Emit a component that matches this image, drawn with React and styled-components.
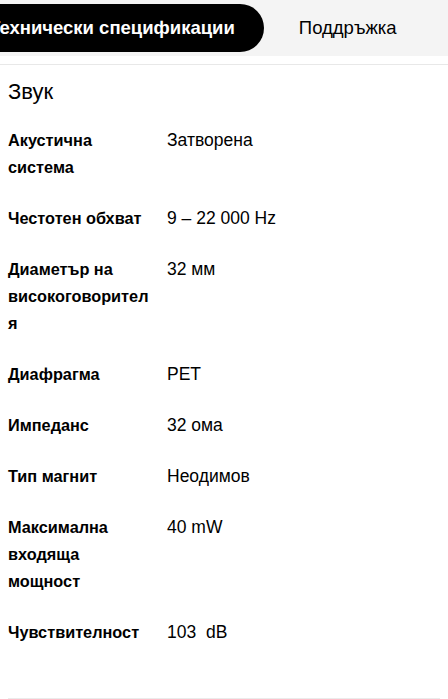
import React from "react";
import styled, { createGlobalStyle } from "styled-components";

const Global = createGlobalStyle`
  html, body { margin: 0; padding: 0; background: #fff; }
  body { font-family: "Liberation Sans", Arial, sans-serif; color: #000; overflow: hidden; }
`;

const Header = styled.header`
  padding-bottom: 8px;
  border-bottom: 1px solid #e8e8e8;
`;

const TabBar = styled.nav`
  background: #f4f4f4;
  padding: 4px 0;
  overflow: hidden;
`;

const TabList = styled.div`
  display: flex;
  align-items: center;
  gap: 6px;
  margin-left: -40px;
  white-space: nowrap;
`;

const Tab = styled.div`
  height: 48px;
  flex: none;
  display: flex;
  align-items: center;
  padding: 0 29px;
  border-radius: 24px;
  font-size: 18.5px;
  font-weight: ${(p) => (p.$active ? 700 : 400)};
  background: ${(p) => (p.$active ? "#000" : "transparent")};
  color: ${(p) => (p.$active ? "#fff" : "#000")};
`;

const Section = styled.section`
  padding: 0 8px;
  margin-top: 11px;
`;

const Heading = styled.h2`
  margin: 0;
  font-size: 22px;
  font-weight: 400;
  line-height: 32px;
`;

const Table = styled.dl`
  margin: 7px 0 0;
  display: grid;
  grid-template-columns: 159px 1fr;
  border-bottom: 1px solid #ebebeb;
  padding-bottom: 40px;
`;

const Label = styled.dt`
  font-size: 16.3px;
  font-weight: 700;
  line-height: 27px;
  padding: 12px 16px 12px 0;
  overflow-wrap: anywhere;
`;

const Value = styled.dd`
  margin: 0;
  font-size: 17.5px;
  line-height: 27px;
  padding: 12px 0;
`;

const specs = [
  ["Акустична система", "Затворена"],
  ["Честотен обхват", "9 – 22 000 Hz"],
  ["Диаметър на високоговорителя", "32 мм"],
  ["Диафрагма", "PET"],
  ["Импеданс", "32 ома"],
  ["Тип магнит", "Неодимов"],
  ["Максимална входяща мощност", "40 mW"],
  ["Чувствителност", "103\u00a0 dB"],
];

export default function App() {
  return (
    <>
      <Global />
      <Header>
        <TabBar>
          <TabList>
            <Tab $active>Технически спецификации</Tab>
            <Tab>Поддръжка</Tab>
          </TabList>
        </TabBar>
      </Header>
      <Section>
        <Heading>Звук</Heading>
        <Table>
          {specs.map(([k, v]) => (
            <React.Fragment key={k}>
              <Label>{k}</Label>
              <Value>{v}</Value>
            </React.Fragment>
          ))}
        </Table>
      </Section>
    </>
  );
}
